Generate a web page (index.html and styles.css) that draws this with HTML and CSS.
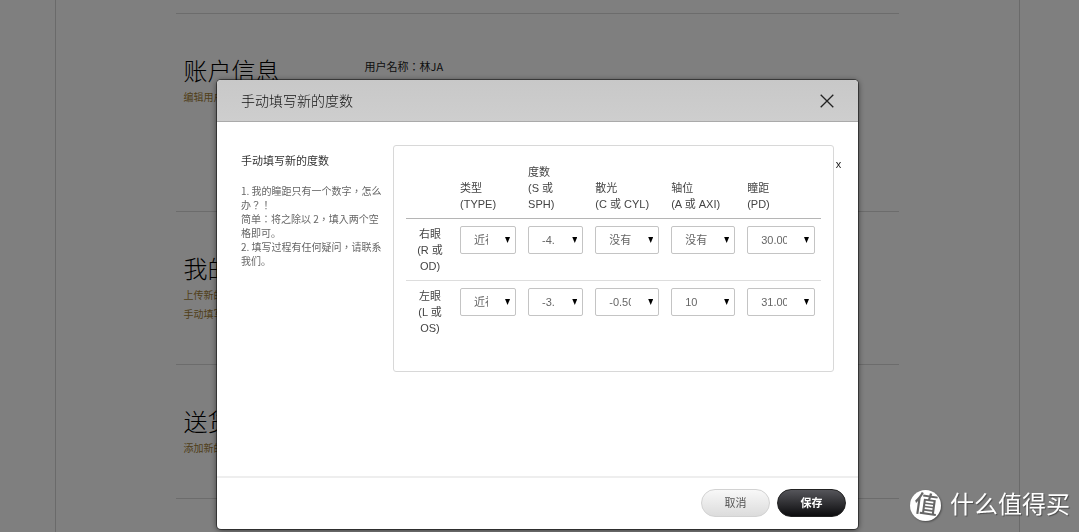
FILE: index.html
```html
<!DOCTYPE html>
<html lang="zh-CN">
<head>
<meta charset="utf-8">
<title>账户信息</title>
<link rel="stylesheet" href="styles.css">
</head>
<body>
<main class="page">
  <section class="section section-tall">
    <div class="section-side">
      <h2 class="section-title">账户信息</h2>
      <a class="section-link" href="#">编辑用户信息</a>
    </div>
    <p class="section-info" lang="zh-TW">用户名称：林JA</p>
  </section>
  <section class="section">
    <div class="section-side">
      <h2 class="section-title">我的度数</h2>
      <a class="section-link" href="#">上传新的度数</a>
      <a class="section-link" href="#">手动填写新的度数</a>
    </div>
  </section>
  <section class="section">
    <div class="section-side">
      <h2 class="section-title">送货地址</h2>
      <a class="section-link" href="#">添加新的地址</a>
    </div>
  </section>
  <section class="section section-end"></section>
</main>

<div class="overlay">
  <form class="modal" role="dialog" aria-labelledby="modal-title">
    <header class="modal-header">
      <h1 class="modal-title" id="modal-title">手动填写新的度数</h1>
      <button class="close" type="button" aria-label="关闭">
        <svg width="14" height="14" viewBox="0 0 14 14" fill="none" stroke="#222" stroke-width="1.3"><path d="M.7.7l12.6 12.6M13.3.7L.7 13.3"/></svg>
      </button>
    </header>
    <div class="modal-body">
      <div class="help">
        <h3 class="help-title">手动填写新的度数</h3>
        <p class="help-text" lang="zh-TW">1. 我的瞳距只有一个数字，怎么<br>办？！<br>简单：将之除以 2，填入两个空<br>格即可<span lang="zh-CN">。</span><br>2. 填写过程有任何疑问，请联系<br>我们<span lang="zh-CN">。</span></p>
      </div>
      <div class="panel">
        <table class="rx">
          <colgroup>
            <col class="col-eye"><col class="col-type"><col class="col-sph"><col class="col-cyl"><col class="col-axis"><col class="col-pd">
          </colgroup>
          <thead>
            <tr>
              <td></td>
              <th scope="col">类型<br>(TYPE)</th>
              <th scope="col">度数<br>(S 或<br>SPH)</th>
              <th scope="col">散光<br>(C 或 CYL)</th>
              <th scope="col">轴位<br>(A 或 AXI)</th>
              <th scope="col">瞳距<br>(PD)</th>
            </tr>
          </thead>
          <tbody>
            <tr>
              <th scope="row">右眼<br>(R 或<br>OD)</th>
              <td><div class="field"><select aria-label="右眼类型"><option>近视</option></select></div></td>
              <td><div class="field"><select aria-label="右眼度数"><option>-4.00</option></select></div></td>
              <td><div class="field"><select aria-label="右眼散光"><option>没有</option></select></div></td>
              <td><div class="field"><select aria-label="右眼轴位"><option>没有</option></select></div></td>
              <td><div class="field"><select aria-label="右眼瞳距"><option>30.00</option></select></div></td>
            </tr>
            <tr>
              <th scope="row">左眼<br>(L 或<br>OS)</th>
              <td><div class="field"><select aria-label="左眼类型"><option>近视</option></select></div></td>
              <td><div class="field"><select aria-label="左眼度数"><option>-3.00</option></select></div></td>
              <td><div class="field"><select aria-label="左眼散光"><option>-0.50</option></select></div></td>
              <td><div class="field"><select aria-label="左眼轴位"><option>10</option></select></div></td>
              <td><div class="field"><select aria-label="左眼瞳距"><option>31.00</option></select></div></td>
            </tr>
          </tbody>
        </table>
      </div>
      <button class="dismiss" type="button">x</button>
    </div>
    <footer class="modal-footer">
      <button class="btn" type="button">取消</button>
      <button class="btn btn-dark" type="submit">保存</button>
    </footer>
  </form>
</div>

<div class="watermark">
  <span class="watermark-badge"><span class="watermark-glyph">值</span></span>
  <span>什么值得买</span>
</div>
</body>
</html>
```
FILE: styles.css
```css
* { box-sizing: border-box; }

body {
  margin: 0;
  background: #fff;
  color: #333;
  font: 400 11px/16px "Liberation Sans", "Noto Sans CJK SC", sans-serif;
  overflow: hidden;
}

h1, h2, h3, p { margin: 0; font-weight: 400; }
button, select { font: inherit; }

/* Account page */
.page {
  width: 90%;
  max-width: 965px;
  min-height: 100vh;
  margin: 0 auto;
  padding: 13px 120px 0;
  border: solid #d4d4d4;
  border-width: 0 1px;
  position: relative;
  right: 3px;
}
.section {
  display: flex;
  border-top: 1px solid #d8d8d8;
  padding: 43px 8px 40px;
}
.section-tall { padding-bottom: 104px; }
.section-end { padding: 0; }
.section-side { width: 181px; }
.section-title {
  padding-bottom: 1px;
  font-size: 24px;
  line-height: 30px;
  font-weight: 300;
  color: #000;
}
.section-link {
  display: block;
  font-size: 10px;
  line-height: 19px;
  color: #a07c32;
  text-decoration: none;
}
.section-info {
  padding-top: 1px;
  font-family: "Noto Sans CJK TC", sans-serif;
  color: #222;
}

/* Dialog */
.overlay {
  position: fixed;
  inset: 0 1px 0 0;
  display: flex;
  justify-content: center;
  align-items: flex-start;
  padding: 80px 4px 0 0;
  background: rgba(0, 0, 0, .5);
}
.modal {
  width: 641px;
  background: #fff;
  border-radius: 4px;
  box-shadow: 0 0 0 1px rgba(0, 0, 0, .45), 0 1px 6px rgba(0, 0, 0, .6);
}
.modal-header {
  display: flex;
  align-items: center;
  justify-content: space-between;
  height: 42px;
  padding: 0 24px;
  background: linear-gradient(#c8c8c8, #cecece);
  border-bottom: 1px solid #aaa;
  border-radius: 4px 4px 0 0;
}
.modal-title { font-size: 14px; line-height: 20px; font-weight: 300; color: #111; }
.close {
  display: flex;
  padding: 0;
  border: 0;
  background: none;
}
.modal-body {
  display: flex;
  align-items: flex-start;
  min-height: 354px;
  padding: 23px 15px 0 24px;
}
.help { flex: 1; white-space: nowrap; }
.help-title { font-size: 11px; line-height: 16px; padding: 8px 0 15px; }
.help-text {
  font-family: "Noto Sans CJK TC", sans-serif;
  font-size: 10px;
  line-height: 14px;
  color: #666;
}
.panel {
  width: 441px;
  padding: 11px 12px 29px;
  border: 1px solid #d8d8d8;
  border-radius: 3px;
}
.dismiss {
  padding: 11px 0 0;
  width: 9px;
  border: 0;
  background: none;
  color: #222;
  text-align: center;
}

/* Prescription table */
.rx { width: 100%; table-layout: fixed; border-collapse: collapse; color: #444; }
.col-eye { width: 48px; }
.col-type { width: 16.4%; }
.col-sph { width: 16.2%; }
.col-cyl, .col-axis { width: 18.3%; }
.rx th, .rx td {
  padding: 7px 6px 6px;
  font-weight: 400;
  text-align: left;
  vertical-align: top;
  white-space: nowrap;
}
.rx thead th { vertical-align: bottom; }
.rx tbody th { text-align: center; }
.rx tbody td { padding-top: 7px; }
.rx tbody tr { border-top: 1px solid #ddd; }
.rx tbody tr:first-child { border-color: #b5b5b5; }

.field { position: relative; }
.field::after {
  content: "";
  position: absolute;
  right: 6px;
  top: 11px;
  width: 5px;
  height: 6px;
  background: #000;
  clip-path: polygon(0 0, 100% 0, 50% 100%);
  pointer-events: none;
}
.field select {
  display: block;
  width: 100%;
  height: 28px;
  padding: 0 27px 0 13px;
  border: 1px solid #c4c4c4;
  border-radius: 2px;
  background: #fff;
  color: #666;
  appearance: none;
  text-overflow: clip;
}

.modal-footer {
  display: flex;
  justify-content: flex-end;
  gap: 7px;
  padding: 11px 12px 12px;
  border-top: 2px solid #eee;
}
.btn {
  width: 69px;
  height: 28px;
  padding: 0;
  border: 1px solid #d2d2d2;
  border-radius: 14px;
  background: linear-gradient(#f8f8f8, #dcdcdc);
  color: #555;
}
.btn-dark {
  border-color: #222;
  background: linear-gradient(#55555a, #0c0c0e);
  color: #fff;
  font-weight: 700;
}

.watermark {
  position: fixed;
  right: 10px;
  bottom: 11px;
  display: flex;
  align-items: center;
  gap: 9px;
  color: #fff;
  font-size: 24px;
  line-height: 32px;
  text-shadow: 1px 1px 1px rgba(0, 0, 0, .4);
}
.watermark-badge {
  display: flex;
  align-items: center;
  justify-content: center;
  width: 31px;
  height: 31px;
  border-radius: 50%;
  background: #fff;
  box-shadow: 1px 1px 2px rgba(0, 0, 0, .4);
  color: #666;
  text-shadow: none;
}
.watermark-glyph { font-weight: 500; transform: rotate(8deg); }
```
